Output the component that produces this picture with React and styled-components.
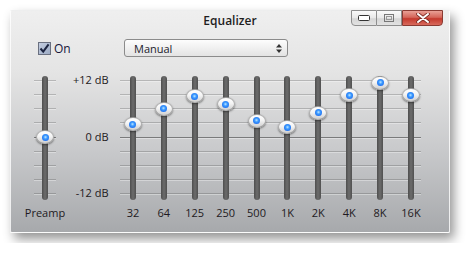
import React from "react";
import styled, { createGlobalStyle } from "styled-components";

const GlobalStyle = createGlobalStyle`
  body {
    margin: 0;
    padding: 10px;
    background: #ffffff;
    font-family: "Open Sans", "Liberation Sans", sans-serif;
  }
`;

const TRACK_H = 124;
const ZERO_Y = 61;
const PX_PER_DB = 4.75;

const bands = [
  { label: "32", db: 2.7 },
  { label: "64", db: 5.9 },
  { label: "125", db: 8.6 },
  { label: "250", db: 6.9 },
  { label: "500", db: 3.4 },
  { label: "1K", db: 2.1 },
  { label: "2K", db: 5.1 },
  { label: "4K", db: 8.8 },
  { label: "8K", db: 11.4 },
  { label: "16K", db: 8.8 },
];

const Window = styled.div`
  width: 440px;
  height: 223px;
  box-sizing: border-box;
  display: flex;
  flex-direction: column;
  border: 1px solid rgba(255, 255, 255, 0.8);
  border-radius: 2px;
  background: linear-gradient(
    to bottom,
    #efefef 0%,
    #e4e4e4 28%,
    #c9cacc 62%,
    #a7a9ac 100%
  );
  box-shadow: 4px 6px 11px rgba(0, 0, 0, 0.42);
`;

const TitleBar = styled.div`
  display: grid;
  grid-template-columns: 1fr auto 1fr;
  height: 28px;
`;

const Title = styled.div`
  grid-column: 2;
  padding-top: 2px;
  font-size: 12px;
  font-weight: 600;
  line-height: 16px;
  color: #1e1e1e;
`;

const Caption = styled.div`
  grid-column: 3;
  justify-self: end;
  align-self: start;
  display: flex;
  height: 16px;
  margin-top: -1px;
  margin-right: 6px;
`;

const CaptionButton = styled.div`
  width: ${({ $w }) => $w}px;
  height: 16px;
  box-sizing: border-box;
  display: flex;
  align-items: center;
  justify-content: center;
  border: 1px solid ${({ $close }) => ($close ? "#8a3a32" : "#8e8e8e")};
  border-left-width: ${({ $first, $close }) => ($first || $close ? 1 : 0)}px;
  border-radius: ${({ $first, $close }) =>
    $first ? "0 0 0 4px" : $close ? "0 0 4px 0" : "0"};
  background: ${({ $close }) =>
    $close
      ? "linear-gradient(to bottom, #e9a096 0%, #d5665a 45%, #c4392d 55%, #d86a5c 100%)"
      : "linear-gradient(to bottom, #fafafa 0%, #e9e9e9 50%, #d6d6d6 55%, #e2e2e2 100%)"};
`;

const Controls = styled.div`
  display: flex;
  align-items: center;
  height: 18px;
  padding-left: 27px;
`;

const Toggle = styled.label`
  width: 86px;
  display: flex;
  align-items: center;
  gap: 3px;
  font-size: 12px;
  color: #16163a;
`;

const CheckBox = styled.span`
  width: 13px;
  height: 13px;
  box-sizing: border-box;
  display: flex;
  align-items: center;
  justify-content: center;
  border: 1px solid #6a7080;
  background: linear-gradient(135deg, #c3cde0 0%, #9dabc4 100%);
`;

const Select = styled.div`
  width: 164px;
  height: 18px;
  box-sizing: border-box;
  display: flex;
  align-items: center;
  justify-content: space-between;
  padding: 0 5px 0 9px;
  border: 1px solid #8b8b8b;
  border-radius: 3px;
  background: linear-gradient(to bottom, #fdfdfd 0%, #f0f0f0 50%, #e3e3e3 100%);
  font-size: 11px;
  color: #1b1b2b;
`;

const Sliders = styled.div`
  display: flex;
  margin-top: 19px;
  padding-left: 12px;
`;

const Column = styled.div`
  width: ${({ $w }) => $w}px;
  display: flex;
  flex-direction: column;
  align-items: center;
`;

const Slot = styled.div`
  display: grid;
  justify-items: center;
  width: 100%;
  height: ${TRACK_H}px;
`;

const Ticks = styled.div`
  grid-area: 1 / 1;
  align-self: start;
  justify-self: ${({ $start }) => ($start ? "start" : "center")};
  margin-left: ${({ $offset }) => $offset || 0}px;
  width: ${({ $w }) => $w}px;
  height: ${TRACK_H}px;
  box-sizing: border-box;
  display: flex;
  flex-direction: column;
  justify-content: space-between;
  padding: 4px 0 6px;
`;

const Tick = styled.div`
  height: 1px;
  background: ${({ $zero }) =>
    $zero ? "rgba(40, 40, 40, 0.5)" : "rgba(60, 60, 60, 0.26)"};
  box-shadow: 0 1px 0 rgba(255, 255, 255, 0.35);
`;

const Rail = styled.div`
  grid-area: 1 / 1;
  position: relative;
  width: 6px;
  height: ${TRACK_H}px;
  border-radius: 3px;
  background: linear-gradient(to right, #4e4e4e 0%, #6c6c6c 50%, #505050 100%);
`;

const Knob = styled.div`
  position: absolute;
  left: 50%;
  width: 18px;
  height: 14px;
  margin-left: -9px;
  box-sizing: border-box;
  display: flex;
  align-items: center;
  justify-content: center;
  border-radius: 50%;
  border: 1px solid rgba(90, 90, 90, 0.45);
  background: linear-gradient(to bottom, #ffffff 0%, #f4f4f4 45%, #cfcfcf 100%);
  box-shadow: 0 1px 2px rgba(0, 0, 0, 0.45);
`;

const Dot = styled.span`
  width: 7px;
  height: 7px;
  border-radius: 50%;
  background: radial-gradient(
    circle at 50% 45%,
    #bfe6ff 0%,
    #3d9bff 35%,
    #0d55e6 100%
  );
`;

const Label = styled.div`
  margin-top: 6px;
  font-size: 11px;
  line-height: 14px;
  color: #1e1a22;
  white-space: nowrap;
`;

const DbScale = styled.div`
  height: ${TRACK_H + 3}px;
  margin-top: -3px;
  align-self: stretch;
  display: flex;
  flex-direction: column;
  justify-content: space-between;
  align-items: flex-end;
  padding-right: 9px;
  font-size: 11px;
  line-height: 14px;
  color: #1e1a22;
`;

const BandGroup = styled.div`
  display: grid;
  width: 309px;
`;

const BandRow = styled.div`
  grid-area: 1 / 1;
  display: flex;
`;

const TickSet = ({ w, start, offset }) => (
  <Ticks $w={w} $start={start} $offset={offset}>
    {Array.from({ length: 9 }, (_, i) => (
      <Tick key={i} $zero={i === 4} />
    ))}
  </Ticks>
);

const Slider = ({ db }) => (
  <Rail>
    <Knob style={{ top: ZERO_Y - db * PX_PER_DB - 7 }}>
      <Dot />
    </Knob>
  </Rail>
);

const Equalizer = () => {
  return (
    <Window>
      <TitleBar>
        <Title>Equalizer</Title>
        <Caption>
          <CaptionButton $w={26} $first>
            <svg width="12" height="6" viewBox="0 0 12 6">
              <rect x="0.5" y="0.5" width="11" height="5" rx="1" fill="#fff" stroke="#333" />
            </svg>
          </CaptionButton>
          <CaptionButton $w={25}>
            <svg width="10" height="8" viewBox="0 0 10 8">
              <rect x="0.5" y="0.5" width="9" height="7" fill="none" stroke="#777" />
              <rect x="2.5" y="2.5" width="5" height="3" fill="none" stroke="#999" />
            </svg>
          </CaptionButton>
          <CaptionButton $w={41} $close>
            <svg width="14" height="10" viewBox="0 0 14 10">
              <path
                d="M2 1 L12 9 M12 1 L2 9"
                stroke="#7a2a22"
                strokeWidth="3.6"
                strokeLinecap="round"
              />
              <path
                d="M2 1 L12 9 M12 1 L2 9"
                stroke="#ffffff"
                strokeWidth="2"
                strokeLinecap="round"
              />
            </svg>
          </CaptionButton>
        </Caption>
      </TitleBar>

      <Controls>
        <Toggle>
          <CheckBox>
            <svg width="11" height="11" viewBox="0 0 11 11">
              <path
                d="M1.5 5.5 L4.2 8.6 L9.6 1.4"
                fill="none"
                stroke="#1c2440"
                strokeWidth="2"
              />
            </svg>
          </CheckBox>
          On
        </Toggle>
        <Select>
          Manual
          <svg width="6" height="9" viewBox="0 0 6 9">
            <path d="M3 0 L6 3.5 L0 3.5 Z M0 5.5 L6 5.5 L3 9 Z" fill="#333" />
          </svg>
        </Select>
      </Controls>

      <Sliders>
        <Column $w={44}>
          <Slot>
            <TickSet w={22} />
            <Slider db={0} />
          </Slot>
          <Label>Preamp</Label>
        </Column>

        <Column $w={50.5}>
          <DbScale>
            <span>+12 dB</span>
            <span>0 dB</span>
            <span>-12 dB</span>
          </DbScale>
        </Column>

        <BandGroup>
          <TickSet w={301} start offset={2.5} />
          <BandRow>
            {bands.map((band) => (
              <Column key={band.label} $w={30.9}>
                <Slot>
                  <Slider db={band.db} />
                </Slot>
                <Label>{band.label}</Label>
              </Column>
            ))}
          </BandRow>
        </BandGroup>
      </Sliders>
    </Window>
  );
};

export default function App() {
  return (
    <>
      <GlobalStyle />
      <Equalizer />
    </>
  );
}
